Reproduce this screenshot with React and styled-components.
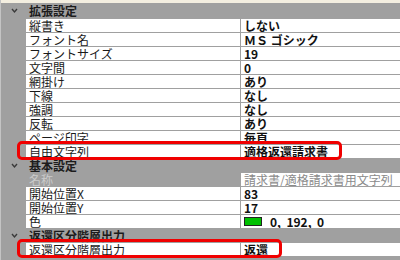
import styled, { createGlobalStyle } from "styled-components"

const gray = '#a0a0a0';
const red = '#f00000';

const Global = createGlobalStyle`
    body {
        margin: 0;
        background: ${gray};
        font-family: "Noto Sans CJK JP", "DejaVu Sans", sans-serif;
    }
`

const Grid = styled.div`
    width: 400px;
    height: 260px;
    overflow: hidden;
    background: ${gray};
    border-left: 1px solid #c4c4c4;
    box-sizing: border-box;
`

const TopStrip = styled.div`
    height: 3px;
    background: #f3eee0;
`

const Section = styled.div`
    display: flex;
    align-items: center;
    height: ${props => props.first ? "15px" : "13px"};
    border-bottom: 1px solid ${gray};
    background: ${gray};
    font-size: 12px;
    font-weight: 700;
    color: #1c1c1c;
`

const Chevron = styled.svg`
    width: 25px;
    flex: none;
`

const SectionTitle = styled.span`
    padding-left: 3px;
    line-height: 13px;
`

const Row = styled.div`
    position: relative;
    display: grid;
    grid-template-columns: 25px 214px 1px 1fr;
    height: 13px;
    border-bottom: 1px solid ${gray};
    font-size: 12px;
    line-height: 13px;

    &::after {
        content: "";
        display: ${props => props.mark ? "block" : "none"};
        position: absolute;
        left: 16px;
        top: -4px;
        width: ${props => props.mark}px;
        height: 19px;
        border: 3px solid ${red};
        border-radius: 5px;
        box-sizing: border-box;
    }
`

const Gutter = styled.div`
    background: ${gray};
`

const Label = styled.div`
    background: ${props => props.disabled ? gray : "white"};
    color: ${props => props.disabled ? "#cbcbcb" : "#1a1a1a"};
    padding-left: 3px;
    white-space: nowrap;
    overflow: hidden;
`

const Divider = styled.div`
    background: ${gray};
`

const Value = styled.div`
    display: flex;
    align-items: center;
    gap: 8px;
    background: white;
    color: ${props => props.disabled ? "#8a8a8a" : "#111"};
    font-weight: ${props => props.disabled ? 400 : 700};
    padding-left: 3px;
    white-space: pre;
    overflow: hidden;
`

const Swatch = styled.span`
    width: 16px;
    height: 7px;
    background: ${props => props.color};
    border: 1px solid #222;
`

function Header({ title, first }) {
    return (
        <Section first={first}>
            <Chevron viewBox="0 0 25 8" height="8">
                <path d="M11 2 L13.5 5 L16 2" fill="none" stroke="#3a3a3a" strokeWidth="1.4" />
            </Chevron>
            <SectionTitle>{title}</SectionTitle>
        </Section>
    )
}

function Prop({ label, value, disabled, mark, swatch }) {
    return (
        <Row mark={mark}>
            <Gutter />
            <Label disabled={disabled}>{label}</Label>
            <Divider />
            <Value disabled={disabled}>
                {swatch && <Swatch color={swatch} />}
                {value}
            </Value>
        </Row>
    )
}

export default function App() {
    return (
        <Grid>
            <Global />
            <TopStrip />
            <Header first title="拡張設定" />
            <Prop label="縦書き" value="しない" />
            <Prop label="フォント名" value="ＭＳ ゴシック" />
            <Prop label="フォントサイズ" value="19" />
            <Prop label="文字間" value="0" />
            <Prop label="網掛け" value="あり" />
            <Prop label="下線" value="なし" />
            <Prop label="強調" value="なし" />
            <Prop label="反転" value="あり" />
            <Prop label="ページ印字" value="毎頁" />
            <Prop label="自由文字列" value="適格返還請求書" mark={325} />
            <Header title="基本設定" />
            <Prop label="名称" value="請求書/適格請求書用文字列" disabled />
            <Prop label="開始位置X" value="83" />
            <Prop label="開始位置Y" value="17" />
            <Prop label="色" value="0,  192,  0" swatch="#00c000" />
            <Header title="返還区分階層出力" />
            <Prop label="返還区分階層出力" value="返還" mark={265} />
        </Grid>
    )
}
